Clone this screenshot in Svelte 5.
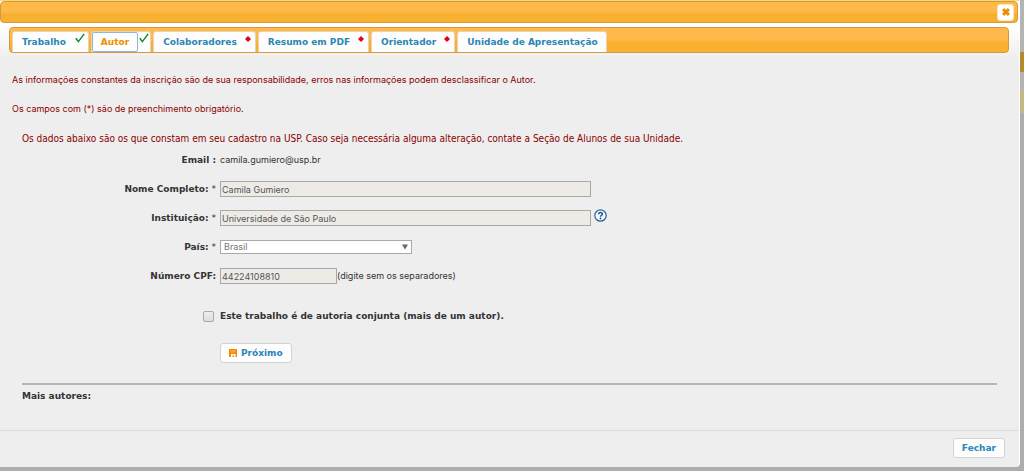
<script lang="ts">
  type Status = 'done' | 'pending' | 'none';

  interface Tab {
    label: string;
    status: Status;
  }

  const tabs: Tab[] = [
    { label: 'Trabalho', status: 'done' },
    { label: 'Autor', status: 'done' },
    { label: 'Colaboradores', status: 'pending' },
    { label: 'Resumo em PDF', status: 'pending' },
    { label: 'Orientador', status: 'pending' },
    { label: 'Unidade de Apresentação', status: 'none' },
  ];

  let active = $state('Autor');
  let pais = $state('Brasil');
  let conjunta = $state(false);
</script>

<div class="page">
  <div class="dialog" role="dialog" aria-label="Inscrição">
    <div class="titlebar">
      <button class="close" type="button" aria-label="Fechar janela">
        <svg width="8" height="8" viewBox="0 0 8 8">
          <path d="M1.1 1.1 6.9 6.9M6.9 1.1 1.1 6.9" stroke="#ef8c08" stroke-width="2.9" />
        </svg>
      </button>
    </div>

    <nav class="tabs">
      {#each tabs as tab}
        <div class="tab {tab.status}" class:active={tab.label === active}>
          <a href="#aba" onclick={() => (active = tab.label)}>{tab.label}</a>
          {#if tab.status === 'done'}
            <svg class="check" width="10" height="10" viewBox="0 0 10 10">
              <path d="M0.8 5.2 3.4 8.6 9.2 0.9" fill="none" stroke="#168a26" stroke-width="1.5" />
            </svg>
          {:else if tab.status === 'pending'}
            <svg class="diamond" width="6" height="6" viewBox="0 0 6 6">
              <path d="M3 0 6 3 3 6 0 3Z" fill="#e2001a" />
            </svg>
          {/if}
        </div>
      {/each}
    </nav>

    <div class="notices">
      <p>As informações constantes da inscrição são de sua responsabilidade, erros nas informações podem desclassificar o Autor.</p>
      <p>Os campos com (*) são de preenchimento obrigatório.</p>
    </div>

    <form class="panel">
      <p class="intro">Os dados abaixo são os que constam em seu cadastro na USP. Caso seja necessária alguma alteração, contate a Seção de Alunos de sua Unidade.</p>

      <div class="fields">
        <span class="label"><b>Email :</b></span>
        <span class="value">camila.gumiero@usp.br</span>

        <label class="label" for="nome"><b>Nome Completo:</b> *</label>
        <div class="value">
          <input class="text" id="nome" value="Camila Gumiero" disabled />
        </div>

        <label class="label" for="instituicao"><b>Instituição:</b> *</label>
        <div class="value">
          <input class="text" id="instituicao" value="Universidade de São Paulo" disabled />
          <svg class="help" width="13" height="13" viewBox="0 0 13 13">
            <circle cx="6.5" cy="6.5" r="5.7" fill="#f4f8fb" stroke="#2a6496" stroke-width="1.2" />
            <path d="M4.6 5.2C4.6 2.9 8.4 2.9 8.4 5.1C8.4 6.4 6.5 6.3 6.5 7.8" fill="none" stroke="#1f5a94" stroke-width="1.5" />
            <circle cx="6.5" cy="9.5" r="0.9" fill="#1f5a94" />
          </svg>
        </div>

        <label class="label" for="pais"><b>País:</b> *</label>
        <div class="select">
          <select id="pais" bind:value={pais}>
            <option>Brasil</option>
          </select>
          <svg class="arrow" width="6" height="6" viewBox="0 0 6 6">
            <path d="M0 0.5H6L3 5.5Z" fill="#666" />
          </svg>
        </div>

        <label class="label" for="cpf"><b>Número CPF:</b></label>
        <div class="value">
          <input class="text short" id="cpf" value="44224108810" disabled />
          <span>(digite sem os separadores)</span>
        </div>
      </div>

      <div class="joint">
        <input type="checkbox" id="conjunta" bind:checked={conjunta} />
        <label for="conjunta">Este trabalho é de autoria conjunta (mais de um autor).</label>
      </div>

      <button class="btn next" type="button">
        <svg width="8" height="8" viewBox="0 0 8 8">
          <path d="M0 0H8V8H6.5V5H2V8H0Z" fill="#ef8c08" />
          <path d="M1.5 1H6.5V3.5H1.5Z" fill="#f9a22c" />
          <path d="M3.6 6.2H5V8H3.6Z" fill="#ef8c08" />
        </svg>
        Próximo
      </button>

      <hr />
      <h2>Mais autores:</h2>
    </form>

    <div class="footer">
      <button class="btn" type="button">Fechar</button>
    </div>
  </div>
</div>

<style>
  :global(body) {
    margin: 0;
    background: #adadad;
  }
  .page {
    padding: 0 4px 3px 0;
    background: linear-gradient(
      #b4b4b4 52px, #b48a2c 52px, #b48a2c 72px,
      #b4b4b4 72px, #b4b4b4 91px, #c2b883 91px, #c2b883 113px, #adadad 113px
    );
    font-family: Verdana, "DejaVu Sans", sans-serif;
    font-size: 9px;
    line-height: 12px;
    color: #333;
  }
  .dialog {
    box-sizing: border-box;
    border-top: 1px solid #fdd876;
    border-right: 1px solid #fff;
    border-radius: 0 0 4px 0;
    background: linear-gradient(#fff 24px, #eee 58px);
    overflow: hidden;
  }
  .titlebar {
    display: flex;
    justify-content: flex-end;
    align-items: center;
    box-sizing: border-box;
    height: 22px;
    margin: 0 1px 4px 0;
    padding: 0 3px;
    border: 1px solid #d59a3c;
    border-radius: 4px;
    background: linear-gradient(#ffb94a 50%, #f7b030 60%);
  }
  .close {
    display: grid;
    place-items: center;
    width: 17px;
    height: 17px;
    padding: 0;
    border: 1px solid #fde3b5;
    border-radius: 3px;
    background: #fff;
  }
  .tabs {
    display: flex;
    align-items: flex-end;
    gap: 2px;
    box-sizing: border-box;
    height: 26px;
    margin: 0 10px 0 9px;
    padding: 0 2px;
    border: 1px solid #d59a3c;
    border-radius: 4px;
    background: linear-gradient(#ffb94a 50%, #f7b030 60%);
  }
  .tab {
    display: flex;
    box-sizing: border-box;
    height: 21px;
    padding: 0 3px 0 0;
    border: 1px solid #e8d3b0;
    border-bottom: 0;
    border-radius: 3px 3px 0 0;
    background: #fdfdfd;
  }
  .tab a {
    padding: 4px 8px 4px 9px;
    border-radius: 2px;
    font-weight: bold;
    color: #2a86b5;
    text-decoration: none;
    white-space: nowrap;
  }
  .tab.pending {
    padding: 0 4px 0 0;
  }
  .tab.none {
    padding: 0;
  }
  .tab.active {
    padding: 0 1px 0 0;
  }
  .tab.active a {
    padding: 3px 8px;
    border: 1px solid #8fb4e0;
    color: #eb8f00;
  }
  .check {
    margin: 1px 0 0 1px;
  }
  .diamond {
    margin-top: 4px;
  }
  .notices {
    padding: 21px 12px 0;
    font-family: Inter, sans-serif;
    color: #8b0000;
  }
  .notices p {
    margin: 0 0 17px;
  }
  .panel {
    padding: 1px 22px 0;
  }
  .intro {
    margin: 0 0 7px;
    font-family: "DejaVu Sans Condensed", "DejaVu Sans", sans-serif;
    font-size: 10px;
    color: #8b0000;
  }
  .fields {
    display: grid;
    grid-template-columns: 194px 1fr;
    grid-auto-rows: 16px;
    column-gap: 4px;
    row-gap: 13px;
    align-items: center;
  }
  .label {
    text-align: right;
  }
  .value,
  .select {
    font-family: Inter, sans-serif;
  }
  .value {
    display: flex;
    align-items: center;
  }
  .text {
    box-sizing: border-box;
    width: 371px;
    height: 16px;
    padding: 0 1px;
    border: 1px solid #a9a9a9;
    background: #eeebe7;
    font: inherit;
    color: #555;
  }
  .text.short {
    width: 117px;
  }
  .help {
    margin: 0 0 6px 3px;
  }
  .select {
    position: relative;
    width: 192px;
    height: 14px;
  }
  .select select {
    display: block;
    appearance: none;
    box-sizing: border-box;
    width: 100%;
    height: 14px;
    padding: 0 3px;
    border: 1px solid #a9a9a9;
    border-radius: 0;
    background: #fff;
    font: inherit;
    line-height: 12px;
    color: #777;
  }
  .arrow {
    position: absolute;
    top: 4px;
    right: 4px;
    pointer-events: none;
  }
  .joint {
    display: flex;
    align-items: center;
    gap: 6px;
    margin: 26px 0 0 181px;
    font-weight: bold;
  }
  .joint input {
    appearance: none;
    box-sizing: border-box;
    width: 11px;
    height: 11px;
    margin: 0;
    border: 1px solid #a9a9a9;
    border-radius: 2px;
    background: linear-gradient(#eee, #ddd);
  }
  .joint input:checked {
    background: #2a86b5;
  }
  .btn {
    display: flex;
    align-items: center;
    gap: 4px;
    height: 20px;
    padding: 0 8px;
    border: 1px solid #d3d3d3;
    border-radius: 3px;
    background: #fdfdfd;
    font: inherit;
    font-weight: bold;
    color: #2a86b5;
  }
  .next {
    margin: 21px 0 20px 198px;
  }
  hr {
    height: 2px;
    margin: 0 0 5px;
    border: 0;
    background: #b5b5b5;
  }
  h2 {
    margin: 0;
    font-size: 9px;
    line-height: 12px;
  }
  .footer {
    display: flex;
    justify-content: flex-end;
    margin-top: 28px;
    padding: 7px 14px 9px;
    border-top: 1px solid #ddd;
  }
</style>
